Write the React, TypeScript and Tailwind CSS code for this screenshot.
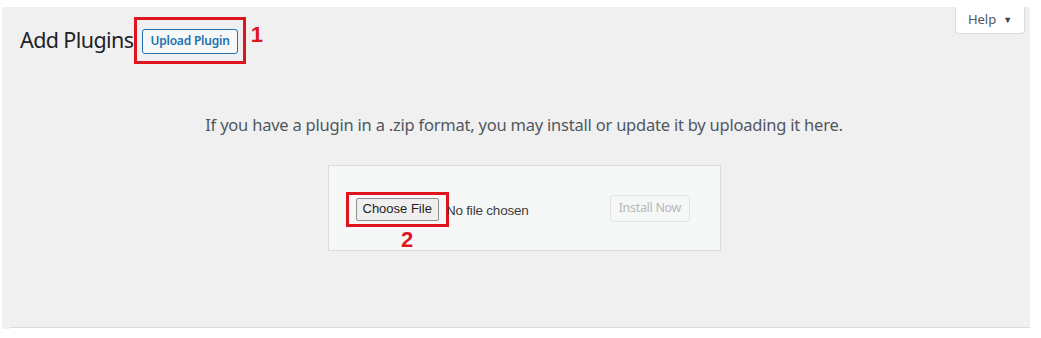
import React from "react";

export default function App() {
  return (
    <div className="w-[1041px] h-[338px] bg-white overflow-hidden">
      <div className="relative ml-[2px] mt-[7px] w-[1028px] h-[322px] bg-[#f0f0f1] font-['Noto_Sans',sans-serif]">
        {/* help tab */}
        <div className="absolute top-0 right-[5px] w-[70px] h-[27px] bg-white border border-t-0 border-[#dcdcde] rounded-b-[4px] flex items-center justify-center gap-[7px] text-[13px] text-[#50575e]">
          <span>Help</span>
          <span className="text-[9px] text-[#3c434a]">▼</span>
        </div>

        <div className="flex items-center pl-[18px] pt-[10px]">
          <h1 className="text-[21.5px] leading-[44px] text-[#1d2327] tracking-[-0.6px]">Add Plugins</h1>
          <div className="ml-[1px] border-[3px] border-[#e0141e] px-[5px] pt-[7px] pb-[7px]">
            <button className="h-[25px] px-[7px] border border-[#2271b1] rounded-[3px] bg-[#f6f7f7] text-[#2271b1] text-[12px] font-semibold leading-none tracking-[-0.2px]">
              Upload Plugin
            </button>
          </div>
          <span className="ml-[5px] -mt-[12px] text-[22px] font-bold text-[#e0141e] font-['Liberation_Sans',sans-serif]">1</span>
        </div>

        <div className="pl-[16px]">
          <p className="mt-[49px] text-center text-[16.5px] text-[#50575e] tracking-[-0.22px] leading-[24px]">
            If you have a plugin in a .zip format, you may install or update it by uploading it here.
          </p>

          <div className="mx-auto mt-[28px] w-[393px] h-[86px] bg-[#f6f7f7] border border-[#dcdcde] flex items-start pl-[17px] pt-[26px] font-['Liberation_Sans',sans-serif]">
            <div className="flex flex-col items-center">
              <div className="border-[3px] border-[#e0141e] px-[7px] py-[3px]">
                <div className="h-[23px] px-[6px] bg-[#efefef] border border-[#8f8f8f] rounded-[2px] flex items-center text-[13px] text-[#1d1d1d]">
                  Choose File
                </div>
              </div>
              <span className="mt-[2px] ml-[20px] text-[22px] leading-[22px] font-bold text-[#e0141e]">2</span>
            </div>
            <span className="-ml-[3px] mt-[9px] text-[13.5px] text-[#3c3c3c] tracking-[-0.2px]">No file chosen</span>
            <div className="ml-[81px] mt-[3px] h-[27px] px-[8px] flex items-center border border-[#e2e4e7] rounded-[3px] text-[12.5px] text-[#b4b9be] font-['Noto_Sans',sans-serif] tracking-[-0.3px]">
              Install Now
            </div>
          </div>
        </div>

        <div className="absolute bottom-[0px] left-[8px] right-0 h-[2px] border-t border-[#dcdcde] bg-white" />
      </div>
    </div>
  );
}
